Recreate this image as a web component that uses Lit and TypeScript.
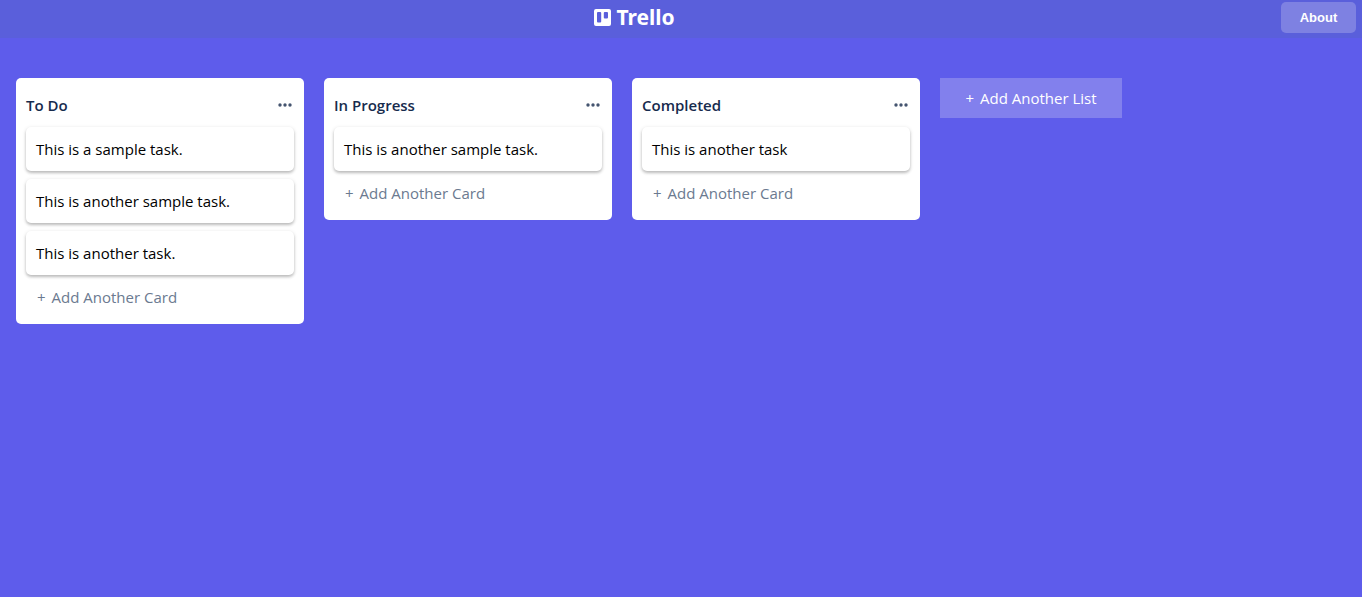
import { LitElement, html, css, svg } from "lit";
import { customElement, property, state } from "lit/decorators.js";

interface BoardList {
  title: string;
  cards: string[];
}

@customElement("board-header")
class BoardHeader extends LitElement {
  static styles = css`
    :host {
      display: block;
    }
    .bar {
      display: flex;
      align-items: flex-start;
      gap: 12px;
      padding: 2px 6px 5px 0;
      background: #5a5fdb;
    }
    .brand {
      display: flex;
      flex: 1;
      justify-content: center;
    }
    .logo {
      display: flex;
      align-items: center;
      gap: 5px;
      color: #fff;
      font: 700 21px/31px "Noto Sans", sans-serif;
      text-decoration: none;
    }
    .mark {
      display: block;
      width: 17px;
      height: 17px;
    }
    .about {
      width: 75px;
      height: 31px;
      padding: 0;
      border: 0;
      border-radius: 5px;
      background: #7e81e2;
      color: #fff;
      font: 700 13px/16px "Liberation Sans", sans-serif;
      cursor: pointer;
    }
  `;

  render() {
    return html`
      <header class="bar">
        <div class="brand">
          <a class="logo" href="#">
            <svg class="mark" viewBox="0 0 17 17" aria-hidden="true">
              <path
                fill="#fff"
                fill-rule="evenodd"
                d="M2 0h13a2 2 0 0 1 2 2v13a2 2 0 0 1-2 2H2a2 2 0 0 1-2-2V2a2 2 0 0 1 2-2zM4 3a1 1 0 0 0-1 1v8.5a1 1 0 0 0 1 1h2.2a1 1 0 0 0 1-1V4a1 1 0 0 0-1-1zM10.8 3a1 1 0 0 0-1 1v4.5a1 1 0 0 0 1 1H13a1 1 0 0 0 1-1V4a1 1 0 0 0-1-1z"
              />
            </svg>
            <span>Trello</span>
          </a>
        </div>
        <button class="about" type="button">About</button>
      </header>
    `;
  }
}

@customElement("board-list")
class BoardListElement extends LitElement {
  @property({ attribute: false }) list: BoardList = { title: "", cards: [] };

  static styles = css`
    :host {
      display: block;
      flex: 0 0 288px;
    }
    .list {
      padding: 15px 10px;
      border-radius: 5px;
      background: #fff;
    }
    .head {
      display: flex;
      justify-content: space-between;
      align-items: center;
      height: 24px;
      margin-bottom: 10px;
    }
    .title {
      margin: 0;
      color: #172b4d;
      font: 600 15px/24px "Open Sans", sans-serif;
    }
    .menu {
      display: flex;
      padding: 6px 1px;
      border: 0;
      background: none;
      cursor: pointer;
    }
    .dots {
      width: 16px;
      height: 10px;
    }
    .cards {
      display: flex;
      flex-direction: column;
      gap: 8px;
      margin: 0;
      padding: 0;
      list-style: none;
    }
    .card {
      padding: 10px;
      border-radius: 5px;
      background: #fff;
      box-shadow: 0 1px 4px rgba(0, 0, 0, 0.12), 0 2px 3px rgba(0, 0, 0, 0.2);
      color: #000;
      font: 400 15px/24px "Open Sans", sans-serif;
    }
    .add {
      display: flex;
      gap: 6px;
      margin-top: 10px;
      padding: 0 11px;
      border: 0;
      background: none;
      color: #6b7a90;
      font: 400 15px/24px "Open Sans", sans-serif;
      cursor: pointer;
    }
  `;

  render() {
    return html`
      <section class="list">
        <div class="head">
          <h2 class="title">${this.list.title}</h2>
          <button class="menu" type="button" aria-label="List actions">
            <svg class="dots" viewBox="0 0 16 10" fill="#44546f" aria-hidden="true">
              ${[3, 8, 13].map((x) => svg`<circle cx=${x} cy="5" r="1.7" />`)}
            </svg>
          </button>
        </div>
        <ul class="cards">
          ${this.list.cards.map((card) => html`<li class="card">${card}</li>`)}
        </ul>
        <button class="add" type="button"><span>+</span> <span>Add Another Card</span></button>
      </section>
    `;
  }
}

@customElement("app-root")
class AppRoot extends LitElement {
  @state() private lists: BoardList[] = [
    {
      title: "To Do",
      cards: ["This is a sample task.", "This is another sample task.", "This is another task."],
    },
    { title: "In Progress", cards: ["This is another sample task."] },
    { title: "Completed", cards: ["This is another task"] },
  ];

  static styles = css`
    :host {
      display: block;
      min-height: 100vh;
      background: #5e5ceb;
    }
    .board {
      display: flex;
      align-items: flex-start;
      gap: 20px;
      padding: 40px 16px;
    }
    .add-list {
      display: flex;
      flex: none;
      justify-content: center;
      gap: 6px;
      min-width: 182px;
      padding: 8px 24px;
      border: 0;
      background: #8280ed;
      color: #fff;
      font: 400 15px/24px "Open Sans", sans-serif;
      cursor: pointer;
    }
  `;

  render() {
    return html`
      <board-header></board-header>
      <main class="board">
        ${this.lists.map((list) => html`<board-list .list=${list}></board-list>`)}
        <button class="add-list" type="button"><span>+</span> <span>Add Another List</span></button>
      </main>
    `;
  }
}
